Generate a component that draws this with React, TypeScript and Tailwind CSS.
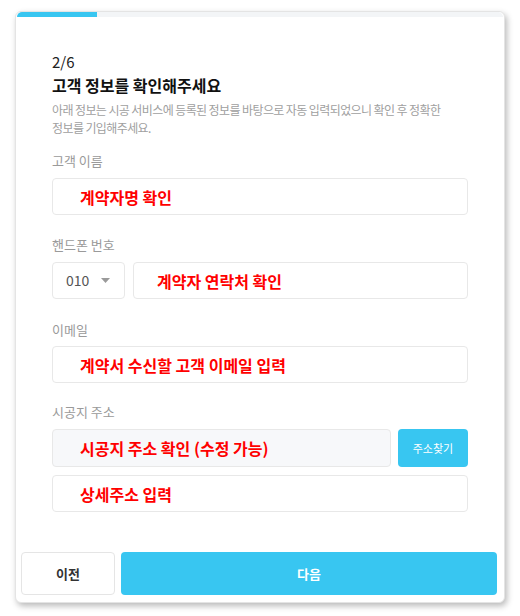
import React from "react";

const font = { fontFamily: '"Noto Sans CJK KR", "Noto Sans", sans-serif' };

export default function App() {
  return (
    <div className="w-[520px] h-[616px] bg-white relative" style={font}>
      <div className="absolute left-[15px] top-[11px] w-[490px] h-[592px] bg-white rounded-[6px] border border-[#e4e4e4] shadow-[2px_3px_6px_rgba(0,0,0,0.28)] flex flex-col overflow-hidden">
        <div className="mx-[1px] mt-[0px] h-[5px] bg-[#f3f5f7] rounded-t-[5px] flex">
          <div className="w-[80px] h-full bg-[#38c6f1] rounded-tl-[5px]" />
        </div>
        <div className="px-[36px] flex flex-col flex-1">
          <div className="mt-[35px] text-[15px] leading-[20px] text-[#222]">2/6</div>
          <div className="mt-[2px] text-[16px] leading-[22px] font-bold text-[#111]">고객 정보를 확인해주세요</div>
          <div className="mt-[5px] text-[12px] leading-[18px] tracking-[-0.6px] text-[#a0a0a0] w-[400px]">
            아래 정보는 시공 서비스에 등록된 정보를 바탕으로 자동 입력되었으니 확인 후 정확한 정보를 기입해주세요.
          </div>

          <div className="mt-[15px] text-[13px] leading-[18px] text-[#9a9a9a]">고객 이름</div>
          <div className="mt-[8px] h-[37px] border border-[#e8e8e8] rounded-[4px] flex items-center pl-[27px]">
            <span className="text-[16px] font-bold text-[#ff0000]">계약자명 확인</span>
          </div>

          <div className="mt-[21px] text-[13px] leading-[18px] text-[#9a9a9a]">핸드폰 번호</div>
          <div className="mt-[8px] h-[37px] flex gap-[8px]">
            <div className="w-[73px] h-full border border-[#e8e8e8] rounded-[4px] flex items-center pl-[13px] gap-[12px]">
              <span className="text-[14px] text-[#555]">010</span>
              <svg width="9" height="5" viewBox="0 0 9 5"><path d="M0 0 L9 0 L4.5 5 Z" fill="#9a9a9a" /></svg>
            </div>
            <div className="flex-1 h-full border border-[#e8e8e8] rounded-[4px] flex items-center pl-[23px]">
              <span className="text-[16px] font-bold text-[#ff0000]">계약자 연락처 확인</span>
            </div>
          </div>

          <div className="mt-[22px] text-[13px] leading-[18px] text-[#9a9a9a]">이메일</div>
          <div className="mt-[7px] h-[37px] border border-[#e8e8e8] rounded-[4px] flex items-center pl-[27px]">
            <span className="text-[16px] font-bold text-[#ff0000]">계약서 수신할 고객 이메일 입력</span>
          </div>

          <div className="mt-[20px] text-[13px] leading-[18px] text-[#9a9a9a]">시공지 주소</div>
          <div className="mt-[8px] h-[38px] flex gap-[7px]">
            <div className="flex-1 h-full border border-[#e8e8e8] bg-[#f7f8fa] rounded-[4px] flex items-center pl-[27px]">
              <span className="text-[16px] font-bold text-[#ff0000]">시공지 주소 확인 (수정 가능)</span>
            </div>
            <div className="w-[70px] h-full bg-[#38c6f1] rounded-[4px] flex items-center justify-center">
              <span className="text-[11px] text-white">주소찾기</span>
            </div>
          </div>
          <div className="mt-[8px] h-[37px] border border-[#e8e8e8] rounded-[4px] flex items-center pl-[27px]">
            <span className="text-[16px] font-bold text-[#ff0000]">상세주소 입력</span>
          </div>
        </div>
        <div className="flex gap-[6px] pl-[5px] pr-[7px] pb-[7px]">
          <div className="w-[94px] h-[43px] border border-[#e5e5e5] rounded-[4px] flex items-center justify-center">
            <span className="text-[13px] font-bold text-[#333]">이전</span>
          </div>
          <div className="flex-1 h-[43px] bg-[#38c6f1] rounded-[4px] flex items-center justify-center">
            <span className="text-[13px] font-bold text-white">다음</span>
          </div>
        </div>
      </div>
    </div>
  );
}
